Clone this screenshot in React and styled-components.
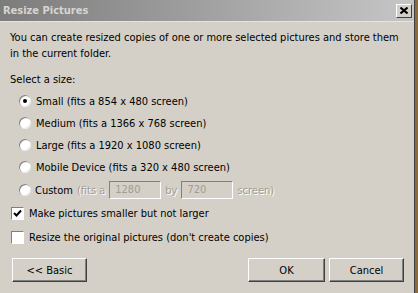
import React from 'react';
import styled, { createGlobalStyle } from 'styled-components';

const Global = createGlobalStyle`
  html, body { margin: 0; padding: 0; background: #8c6c3c; }
  body { font-family: "DejaVu Sans Condensed", "DejaVu Sans", sans-serif; font-stretch: condensed; }
`;

const Window = styled.div`
  width: 415px;
  height: 293px;
  background: #d4d0c8;
  border-right: 1px solid #404040;
  display: flex;
  flex-direction: column;
  box-sizing: border-box;
  overflow: hidden;
`;

const TitleBar = styled.div`
  height: 21px;
  display: flex;
  align-items: center;
  justify-content: space-between;
  padding: 0 2px 0 3px;
  background: linear-gradient(to right, #7c7c7c, #c6c6c6);
  border-bottom: 1px solid #e6e4de;
`;

const Title = styled.span`
  color: #d8d5cf;
  font-weight: bold;
  font-size: 11px;
`;

const CloseButton = styled.div`
  width: 16px;
  height: 14px;
  box-sizing: border-box;
  background: #d4d0c8;
  border: 1px solid;
  border-color: #ffffff #404040 #404040 #ffffff;
  display: flex;
  align-items: center;
  justify-content: center;
`;

const Body = styled.div`
  flex: 1;
  padding: 8px 10px 0 10px;
  display: flex;
  flex-direction: column;
  font-size: 11px;
  color: #000;
`;

const Intro = styled.p`
  margin: 0;
  line-height: 16px;
`;

const Label = styled.div`
  margin-top: 10px;
  line-height: 16px;
`;

const Options = styled.div`
  display: flex;
  flex-direction: column;
  gap: 6px;
  margin-top: 5px;
  padding-left: 9px;
`;

const Row = styled.div`
  display: flex;
  align-items: center;
  height: 16px;
  gap: 5px;
`;

const Radio = styled.span`
  width: 12px;
  height: 12px;
  border-radius: 50%;
  background: #fff;
  box-shadow: inset 1px 1px 0 #808080, inset -1px -1px 0 #e8e8e8;
  display: flex;
  align-items: center;
  justify-content: center;
  flex: none;
  &::after {
    content: '';
    width: 4px;
    height: 4px;
    border-radius: 50%;
    background: ${(p) => (p.$checked ? '#000' : 'transparent')};
  }
`;

const CustomRow = styled(Row)`
  height: 18px;
  gap: 4px;
`;

const Dim = styled.span`
  color: #a09c94;
  text-shadow: 1px 1px 0 #ffffff;
`;

const Field = styled.div`
  width: 52px;
  height: 18px;
  box-sizing: border-box;
  border: 1px solid;
  border-color: #808080 #ffffff #ffffff #808080;
  color: #a09c94;
  padding-left: 5px;
  line-height: 16px;
`;

const Checks = styled.div`
  display: flex;
  flex-direction: column;
  gap: 9px;
  margin-top: 7px;
`;

const CheckRow = styled.div`
  display: flex;
  align-items: center;
  gap: 5px;
  height: 15px;
  margin-left: 1px;
`;

const Box = styled.span`
  width: 13px;
  height: 13px;
  box-sizing: border-box;
  background: #fff;
  border: 1px solid;
  border-color: #808080 #ffffff #ffffff #808080;
  display: flex;
  align-items: center;
  justify-content: center;
  flex: none;
`;

const Buttons = styled.div`
  display: flex;
  align-items: center;
  margin-top: 13px;
  padding-left: 2px;
  gap: 4px;
`;

const Spacer = styled.div`
  flex: 1;
`;

const Button = styled.div`
  width: ${(p) => p.$w}px;
  height: 24px;
  box-sizing: border-box;
  border: 1px solid;
  border-color: #ffffff #404040 #404040 #ffffff;
  box-shadow: inset -1px -1px 0 #808080;
  display: flex;
  align-items: center;
  justify-content: center;
  font-size: 11px;
`;

const sizes = [
  { label: 'Small (fits a 854 x 480 screen)', checked: true },
  { label: 'Medium (fits a 1366 x 768 screen)' },
  { label: 'Large (fits a 1920 x 1080 screen)' },
  { label: 'Mobile Device (fits a 320 x 480 screen)' },
];

export default function App() {
  return (
    <>
      <Global />
      <Window>
        <TitleBar>
          <Title>Resize Pictures</Title>
          <CloseButton>
            <svg width="8" height="7" viewBox="0 0 8 7">
              <path d="M0.5 0.5 L7.5 6.5 M7.5 0.5 L0.5 6.5" stroke="#000" strokeWidth="2" />
            </svg>
          </CloseButton>
        </TitleBar>
        <Body>
          <Intro>
            You can create resized copies of one or more selected pictures and store them in
            the current folder.
          </Intro>
          <Label>Select a size:</Label>
          <Options>
            {sizes.map((s) => (
              <Row key={s.label}>
                <Radio $checked={s.checked} />
                <span>{s.label}</span>
              </Row>
            ))}
            <CustomRow>
              <Radio />
              <span>Custom</span>
              <Dim>(fits a</Dim>
              <Field>1280</Field>
              <Dim>by</Dim>
              <Field>720</Field>
              <Dim>screen)</Dim>
            </CustomRow>
          </Options>
          <Checks>
            <CheckRow>
              <Box>
                <svg width="9" height="9" viewBox="0 0 9 9">
                  <path d="M1 4 L3.5 6.5 L8 1.5" stroke="#000" strokeWidth="2" fill="none" />
                </svg>
              </Box>
              <span>Make pictures smaller but not larger</span>
            </CheckRow>
            <CheckRow>
              <Box />
              <span>Resize the original pictures (don't create copies)</span>
            </CheckRow>
          </Checks>
          <Buttons>
            <Button $w={75}>&lt;&lt; Basic</Button>
            <Spacer />
            <Button $w={77}>OK</Button>
            <Button $w={75}>Cancel</Button>
          </Buttons>
        </Body>
      </Window>
    </>
  );
}
